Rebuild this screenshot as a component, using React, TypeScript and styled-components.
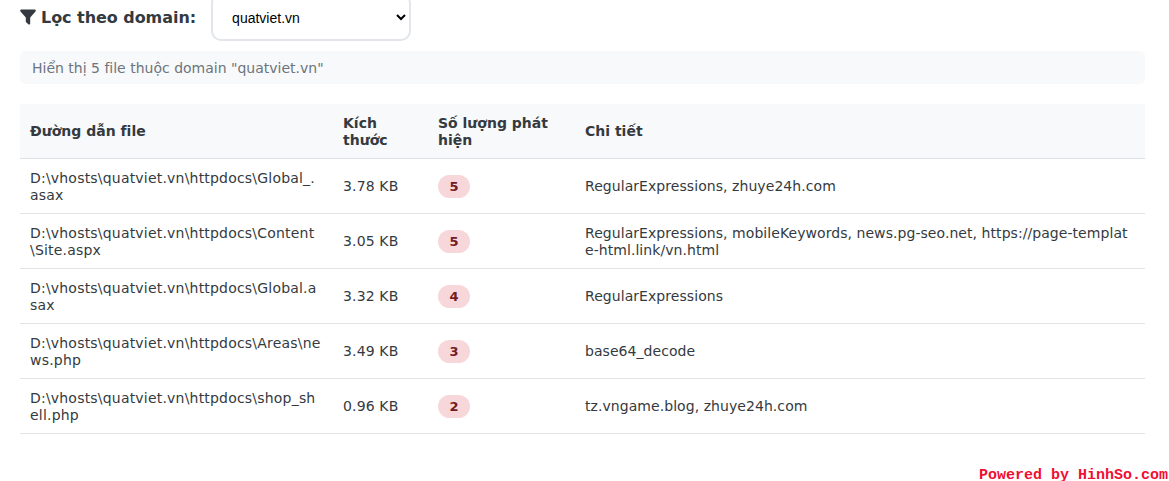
import { createGlobalStyle } from 'styled-components'
import styled from 'styled-components'

const files = [
    { path: 'D:\\vhosts\\quatviet.vn\\httpdocs\\Global_.\nasax', size: '3.78 KB', count: 5, detail: 'RegularExpressions, zhuye24h.com' },
    { path: 'D:\\vhosts\\quatviet.vn\\httpdocs\\Content\n\\Site.aspx', size: '3.05 KB', count: 5, detail: 'RegularExpressions, mobileKeywords, news.pg-seo.net, https://page-templat\ne-html.link/vn.html' },
    { path: 'D:\\vhosts\\quatviet.vn\\httpdocs\\Global.a\nsax', size: '3.32 KB', count: 4, detail: 'RegularExpressions' },
    { path: 'D:\\vhosts\\quatviet.vn\\httpdocs\\Areas\\ne\nws.php', size: '3.49 KB', count: 3, detail: 'base64_decode' },
    { path: 'D:\\vhosts\\quatviet.vn\\httpdocs\\shop_sh\nell.php', size: '0.96 KB', count: 2, detail: 'tz.vngame.blog, zhuye24h.com' },
]

export default function App(){
    return (
        <Page>
            <GlobalStyle />
            <FilterRow>
                <FilterLabel>
                    <svg width="16" height="16" viewBox="0 0 16 16" aria-hidden="true">
                        <path d="M0.2 1.6C0.2 0.9 0.8 0.4 1.5 0.4H14.5C15.2 0.4 15.8 0.9 15.8 1.6C15.8 1.9 15.7 2.2 15.5 2.4L10.2 8.4V14.6C10.2 15.2 9.7 15.6 9.2 15.6C9 15.6 8.8 15.5 8.6 15.4L6.4 13.6C6 13.3 5.8 13 5.8 12.6V8.4L0.5 2.4C0.3 2.2 0.2 1.9 0.2 1.6Z" fill="#343a40" />
                    </svg>
                    Lọc theo domain:
                </FilterLabel>
                <DomainSelect defaultValue="quatviet.vn">
                    <option value="quatviet.vn">quatviet.vn</option>
                </DomainSelect>
            </FilterRow>
            <Notice>Hiển thị 5 file thuộc domain "quatviet.vn"</Notice>
            <FileTable>
                <colgroup>
                    <col style={{ width: "313px" }} />
                    <col style={{ width: "95px" }} />
                    <col style={{ width: "147px" }} />
                    <col />
                </colgroup>
                <thead>
                    <tr>
                        <HeadCell>Đường dẫn file</HeadCell>
                        <HeadCell $stacked>Kích thước</HeadCell>
                        <HeadCell $stacked>Số lượng phát hiện</HeadCell>
                        <HeadCell>Chi tiết</HeadCell>
                    </tr>
                </thead>
                <tbody>
                    {files.map(file => (
                        <tr key={file.path}>
                            <Cell $stacked $spacing={0.2}>{file.path}</Cell>
                            <Cell $spacing={0.15}>{file.size}</Cell>
                            <Cell><CountBadge>{file.count}</CountBadge></Cell>
                            <Cell $stacked={file.detail.includes('\n')} $spacing={0.06}>{file.detail}</Cell>
                        </tr>
                    ))}
                </tbody>
            </FileTable>
            <Watermark>Powered by HinhSo.com</Watermark>
        </Page>
    )
}

const GlobalStyle = createGlobalStyle`
    html, body {
        margin: 0;
        height: 100%;
        overflow: hidden;
        background: #fff;
    }
`

const Page = styled.div`
    position: relative;
    width: 1169px;
    height: 481px;
    overflow: hidden;
    box-sizing: border-box;
    padding: 0 24px 0 20px;
    font-family: "DejaVu Sans", sans-serif;
    font-size: 14px;
    line-height: 17px;
    color: #343a40;
    text-rendering: optimizeSpeed;
`

const FilterRow = styled.div`
    display: flex;
    align-items: center;
    gap: 15px;
    height: 51px;
    margin-top: -7px;
    padding-bottom: 3px;
    box-sizing: border-box;
`

const FilterLabel = styled.label`
    display: flex;
    align-items: center;
    gap: 5px;
    font-size: 16px;
    font-weight: 700;
    letter-spacing: -0.05px;
    color: #343a40;
`

const DomainSelect = styled.select`
    width: 200px;
    height: 48px;
    padding: 2px 15px 0;
    background: #fff;
    border: 2px solid #e2e6ea;
    border-radius: 10px;
    font-family: "Liberation Sans", sans-serif;
    font-size: 14px;
    color: #000;
`

const Notice = styled.div`
    height: 33px;
    box-sizing: border-box;
    margin-top: 7px;
    padding: 9px 12px 7px;
    background: #f8f9fa;
    border-radius: 5px;
    color: #6c757d;
`

const FileTable = styled.table`
    width: 1125px;
    margin-top: 20px;
    border-collapse: collapse;
    table-layout: fixed;
`

const HeadCell = styled.th<{ $stacked?: boolean }>`
    height: 54px;
    box-sizing: border-box;
    padding: ${props => props.$stacked ? "11px 10px 9px" : "10px"};
    background: #f8f9fa;
    border-bottom: 1px solid #dee2e6;
    text-align: left;
    font-weight: 700;
    color: #343a40;
`

const Cell = styled.td<{ $stacked?: boolean; $spacing?: number }>`
    height: 55px;
    box-sizing: border-box;
    padding: ${props => props.$stacked ? "11px 10px 9px" : "10px"};
    border-bottom: 1px solid #e4e4e4;
    vertical-align: middle;
    white-space: pre-line;
    letter-spacing: ${props => props.$spacing ?? 0}px;
`

const CountBadge = styled.span`
    display: inline-block;
    box-sizing: border-box;
    width: 32px;
    height: 23px;
    line-height: 23px;
    border-radius: 12px;
    background: #f8d7da;
    color: #721c24;
    font-size: 13px;
    font-weight: 700;
    text-align: center;
    vertical-align: middle;
`

const Watermark = styled.div`
    position: absolute;
    right: 1px;
    bottom: 0;
    font-family: "Liberation Mono", monospace;
    font-size: 15px;
    font-weight: 700;
    line-height: 11px;
    color: #f00f32;
`
